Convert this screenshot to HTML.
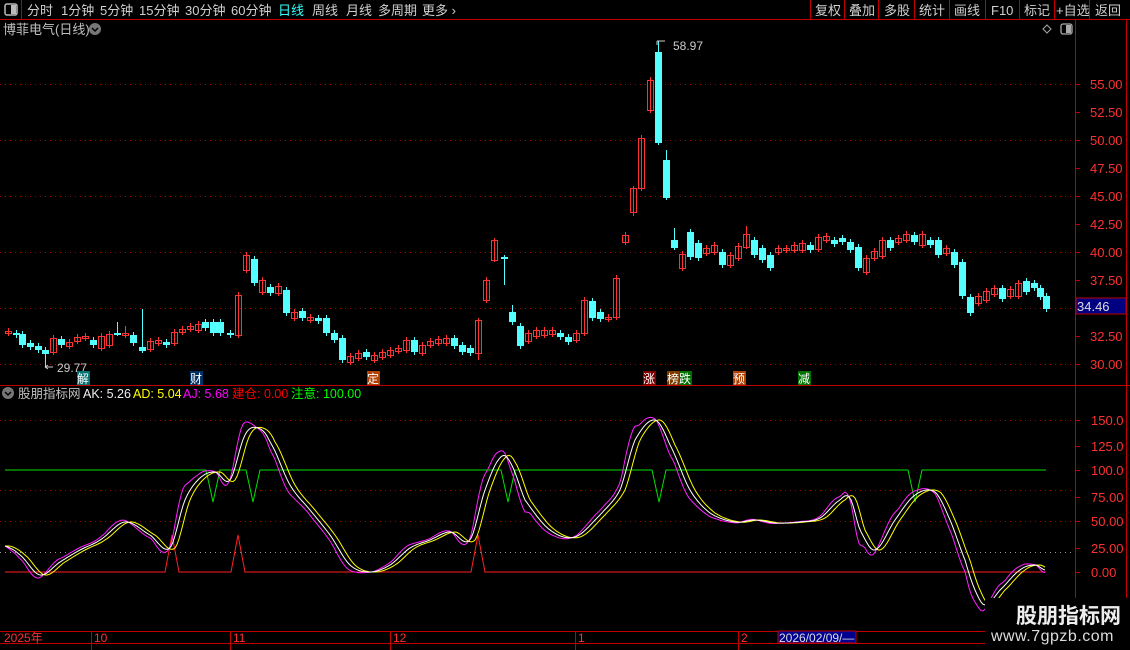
<!DOCTYPE html>
<html><head><meta charset="utf-8">
<style>
html,body{margin:0;padding:0;background:#000;width:1130px;height:650px;overflow:hidden;font-family:"Liberation Sans","Noto Sans CJK SC",sans-serif;}
svg{position:absolute;left:0;top:0}
text{font-family:"Liberation Sans","Noto Sans CJK SC",sans-serif}
</style></head><body>
<svg id="s" width="1130" height="650" xmlns="http://www.w3.org/2000/svg">
<rect width="1130" height="650" fill="#000"/>
<line x1="0" y1="19.5" x2="1130" y2="19.5" stroke="#c00000"/>
<line x1="21.5" y1="0" x2="21.5" y2="19" stroke="#c00000"/>
<rect x="5" y="4" width="12" height="11" rx="2" fill="none" stroke="#bbb" stroke-width="1.5"/>
<rect x="11" y="5" width="5" height="9" fill="#bbb"/>
<g font-size="13" fill="#d0d0d0">
<text x="27" y="15">分时</text><text x="61" y="15">1分钟</text><text x="100" y="15">5分钟</text><text x="139" y="15">15分钟</text><text x="185" y="15">30分钟</text><text x="231" y="15">60分钟</text>
<text x="278" y="15" fill="#3ff">日线</text><text x="312" y="15">周线</text><text x="346" y="15">月线</text><text x="378" y="15">多周期</text><text x="422" y="15">更多 ›</text>
</g>
<g stroke="#c00000"><line x1="810.5" y1="0" x2="810.5" y2="19"/><line x1="844.5" y1="0" x2="844.5" y2="19"/><line x1="878.5" y1="0" x2="878.5" y2="19"/><line x1="914.5" y1="0" x2="914.5" y2="19"/><line x1="949.5" y1="0" x2="949.5" y2="19"/><line x1="985.5" y1="0" x2="985.5" y2="19"/><line x1="1019.5" y1="0" x2="1019.5" y2="19"/><line x1="1054.5" y1="0" x2="1054.5" y2="19"/><line x1="1089.5" y1="0" x2="1089.5" y2="19"/></g>
<g font-size="13" fill="#d0d0d0"><text x="815" y="15">复权</text><text x="849" y="15">叠加</text><text x="884" y="15">多股</text><text x="919" y="15">统计</text><text x="954" y="15">画线</text><text x="991" y="15">F10</text><text x="1024" y="15">标记</text><text x="1056" y="15">+自选</text><text x="1095" y="15">返回</text></g>
<text x="3" y="34" font-size="13" fill="#c0c0c0">博菲电气(日线)</text>
<circle cx="95" cy="29" r="6" fill="#777"/><path d="M92 28l3 3 3-3" stroke="#000" stroke-width="1.5" fill="none"/>
<path d="M1047 25l4 4-4 4-4-4z" fill="none" stroke="#aaa"/>
<rect x="1061" y="24" width="11" height="10" rx="2" fill="none" stroke="#aaa" stroke-width="1.3"/><rect x="1066" y="25" width="5" height="8" fill="#aaa"/>
<line x1="1075.5" y1="20" x2="1075.5" y2="631" stroke="#c00000"/>
<line x1="1126.5" y1="20" x2="1126.5" y2="650" stroke="#c00000"/>
<line x1="0" y1="385.5" x2="1130" y2="385.5" stroke="#c00000"/>
<line x1="0" y1="631.5" x2="985" y2="631.5" stroke="#c00000"/>
<line x1="0" y1="643.5" x2="985" y2="643.5" stroke="#c00000"/>
<g id="grid"></g>
<g font-size="13" fill="#ff3030">
<text x="1090" y="89">55.00</text><text x="1090" y="117">52.50</text><text x="1090" y="145">50.00</text><text x="1090" y="173">47.50</text><text x="1090" y="201">45.00</text><text x="1090" y="229">42.50</text><text x="1090" y="257">40.00</text><text x="1090" y="285">37.50</text><text x="1090" y="341">32.50</text><text x="1090" y="369">30.00</text>
<text x="1091" y="425">150.0</text><text x="1091" y="451">125.0</text><text x="1091" y="475">100.0</text><text x="1091" y="502">75.00</text><text x="1091" y="526">50.00</text><text x="1091" y="553">25.00</text><text x="1091" y="577">0.00</text>
</g>
<rect x="1076" y="298" width="50" height="16" fill="#000080" stroke="#c00000"/>
<text x="1077" y="311" font-size="13" fill="#ddd">34.46</text>
<g id="cand"></g>
<path d="M657 41v4M657 41h8" stroke="#ccc"/><text x="673" y="50" font-size="12" fill="#ccc">58.97</text>
<path d="M45 367h8M45 367l3-2M45 367l3 2" stroke="#ccc" fill="none"/><text x="57" y="372" font-size="12" fill="#ccc">29.77</text>
<g font-size="12" fill="#fff">
<rect x="77" y="371" width="13" height="14" fill="#007070"/><text x="77" y="383">解</text>
<rect x="190" y="371" width="13" height="14" fill="#003060"/><text x="190" y="383">财</text>
<rect x="367" y="371" width="13" height="14" fill="#b04000"/><text x="367" y="383">定</text>
<rect x="643" y="371" width="13" height="14" fill="#800000"/><text x="643" y="383">涨</text>
<rect x="667" y="371" width="13" height="14" fill="#7a3a00"/><text x="667" y="383">榜</text>
<rect x="679" y="371" width="13" height="14" fill="#007000"/><text x="679" y="383">跌</text>
<rect x="733" y="371" width="13" height="14" fill="#b04000"/><text x="733" y="383">预</text>
<rect x="798" y="371" width="13" height="14" fill="#007000"/><text x="798" y="383">减</text>
</g>
<circle cx="8" cy="393" r="6" fill="#777"/><path d="M5 392l3 3 3-3" stroke="#000" stroke-width="1.5" fill="none"/>
<g font-size="12.5"><text x="18" y="398" fill="#c0c0c0">股朋指标网</text><text x="83" y="398" fill="#eee">AK: 5.26</text><text x="133" y="398" fill="#ff0">AD: 5.04</text><text x="183" y="398" fill="#f0f">AJ: 5.68</text><text x="232" y="398" fill="#f00">建仓: 0.00</text><text x="291" y="398" fill="#0f0">注意: 100.00</text></g>
<g id="ind"></g>
<g stroke="#c00000"><line x1="91.5" y1="631" x2="91.5" y2="650"/><line x1="230.5" y1="631" x2="230.5" y2="650"/><line x1="390.5" y1="631" x2="390.5" y2="650"/><line x1="575.5" y1="631" x2="575.5" y2="650"/><line x1="738.5" y1="631" x2="738.5" y2="650"/></g>
<g font-size="12" fill="#ff3030"><text x="4" y="642">2025年</text><text x="94" y="642">10</text><text x="233" y="642">11</text><text x="393" y="642">12</text><text x="578" y="642">1</text><text x="741" y="642">2</text></g>
<rect x="778" y="631" width="78" height="12" fill="#000090" stroke="#c00000"/>
<text x="779" y="642" font-size="12" fill="#ddd">2026/02/09/—</text>
<rect x="985" y="598" width="145" height="52" fill="#000"/>
<text x="1016" y="623" font-size="21" font-weight="bold" fill="#eee">股朋指标网</text>
<text x="991" y="641" font-size="16" fill="#ddd" letter-spacing="0.5">www.7gpzb.com</text>
</svg>
<script>
var NS="http://www.w3.org/2000/svg";
function el(p,t,a){var e=document.createElementNS(NS,t);for(var k in a)e.setAttribute(k,a[k]);document.getElementById(p).appendChild(e);return e;}
[84,140,196,252,308,364].forEach(function(y){el("grid","line",{x1:0,y1:y+.5,x2:1075,y2:y+.5,stroke:"#a00000","stroke-dasharray":"1 4"});});
[420,490,521].forEach(function(y){el("grid","line",{x1:0,y1:y+.5,x2:1075,y2:y+.5,stroke:"#a00000","stroke-dasharray":"1 4"});});
el("grid","line",{x1:0,y1:552.5,x2:1075,y2:552.5,stroke:"#999","stroke-dasharray":"1 4"});
[84,112,140,168,196,224,252,280,308,336,364].forEach(function(y){el("grid","line",{x1:1075,y1:y+.5,x2:1080,y2:y+.5,stroke:"#c00000"});});
[420,446,470,497,521,548,572].forEach(function(y){el("grid","line",{x1:1075,y1:y+.5,x2:1080,y2:y+.5,stroke:"#c00000"});});
var C=[[8,331,333,'r'],[16,333,335,'c'],[22,334,345,'c'],[30,343,347,'c'],[38,346,350,'c'],[45,350,354,'c',347,367],[53,338,352,'r'],[61,339,345,'c'],[69,342,346,'r'],[77,337,341,'r'],[85,336,338,'r'],[93,340,345,'c'],[101,336,348,'r'],[109,334,345,'r'],[117,333,335,'c',322,336],[125,333,335,'r',326,338],[133,335,343,'c'],[142,347,351,'c',309,353],[150,341,349,'r'],[158,340,343,'r'],[166,342,345,'c'],[174,332,343,'r'],[182,329,332,'r'],[190,326,329,'r'],[198,324,330,'r'],[205,322,328,'c'],[213,322,333,'c'],[220,322,333,'c'],[230,333,335,'c'],[238,295,335,'r'],[246,255,270,'r'],[254,259,283,'c'],[262,280,292,'r'],[270,287,293,'c'],[278,286,293,'r'],[286,290,313,'c'],[294,312,318,'r'],[302,311,318,'c'],[310,317,320,'r'],[318,318,321,'c'],[326,318,333,'c'],[334,333,340,'c'],[342,338,360,'c'],[350,356,362,'r'],[358,353,358,'r'],[366,352,357,'c'],[374,355,360,'r'],[382,352,357,'r'],[390,350,355,'r'],[398,348,351,'r'],[406,340,350,'r'],[414,340,352,'c'],[422,345,353,'r'],[430,341,345,'r'],[438,339,343,'r'],[446,338,343,'r'],[454,338,346,'c'],[462,345,352,'c'],[470,348,353,'c'],[478,320,353,'r',318,360],[486,280,300,'r'],[494,240,260,'r',238,262],[504,257,259,'c',255,285],[512,312,322,'c',305,325],[520,326,346,'c'],[528,333,341,'r'],[536,330,336,'r'],[544,330,335,'r'],[552,330,334,'r'],[560,333,337,'c'],[568,337,342,'c'],[576,333,340,'r'],[584,300,333,'r'],[592,301,318,'c'],[600,312,319,'c'],[608,317,319,'r'],[616,278,317,'r'],[625,235,242,'r'],[633,188,212,'r',186,216],[641,138,188,'r'],[650,80,110,'r'],[658,52,143,'c',41,145],[666,160,198,'c',150,200],[674,240,248,'c',228,250],[682,254,268,'r'],[690,232,257,'c'],[698,243,258,'c'],[706,248,253,'r'],[714,245,252,'r'],[722,252,265,'c'],[730,255,265,'r'],[738,246,258,'r'],[746,234,247,'r',226,249],[754,240,255,'c'],[762,248,260,'c'],[770,255,268,'c'],[778,248,252,'r'],[786,248,250,'r'],[794,245,250,'r'],[802,243,250,'r'],[810,245,250,'c'],[818,237,249,'r'],[826,236,240,'r'],[834,240,244,'c'],[842,238,242,'c'],[850,242,250,'c'],[858,247,268,'c'],[866,258,272,'r'],[874,251,258,'r'],[882,240,256,'r'],[890,240,248,'c'],[898,238,242,'r'],[906,234,240,'r'],[914,235,242,'c'],[922,234,245,'r'],[930,240,245,'c'],[938,240,255,'c'],[946,248,253,'r'],[954,252,265,'c'],[962,262,296,'c'],[970,297,313,'c'],[978,296,303,'r'],[986,291,300,'r'],[994,288,294,'r'],[1002,288,299,'c'],[1010,289,296,'r'],[1018,283,296,'r'],[1026,281,292,'c'],[1034,283,288,'c'],[1040,288,297,'c'],[1046,296,309,'c']];
C.forEach(function(c){var col=c[3]=='r'?'#ff3232':'#54ffff';var hi=c[4]||c[1]-3,lo=c[5]||c[2]+3;
el("cand","line",{x1:c[0]+.5,y1:hi,x2:c[0]+.5,y2:lo,stroke:col});
if(c[3]=='r')el("cand","rect",{x:c[0]-2.5,y:c[1]+.5,width:6,height:Math.max(1,c[2]-c[1]),fill:"none",stroke:col});
else el("cand","rect",{x:c[0]-3,y:c[1],width:7,height:Math.max(1,c[2]-c[1]),fill:col});});
var W=[[5,546],[20,555],[40,575],[60,562],[80,550],[100,540],[125,522],[150,535],[170,548],[185,500],[200,478],[215,472],[230,480],[245,435],[258,428],[270,442],[290,485],[310,510],[330,535],[350,565],[370,572],[390,565],[410,548],[430,540],[450,532],[470,540],[485,490],[500,458],[510,462],[525,500],[550,530],[575,537],[600,515],[620,490],[635,440],[655,420],[670,445],[690,490],[710,513],[735,522],[755,520],[775,523],[800,522],[820,518],[840,500],[850,498],[860,530],[875,550],[895,520],[915,495],[935,492],[950,520],[965,560],[975,590],[985,605],[1000,590],[1020,570],[1035,565],[1045,570]];
function interp(x){if(x<=W[0][0])return W[0][1];for(var i=0;i<W.length-1;i++){if(x<=W[i+1][0]){var a=W[Math.max(0,i-1)],b=W[i],c=W[i+1],d=W[Math.min(W.length-1,i+2)];var t=(x-b[0])/(c[0]-b[0]);var t2=t*t,t3=t2*t;return 0.5*((2*b[1])+(-a[1]+c[1])*t+(2*a[1]-5*b[1]+4*c[1]-d[1])*t2+(-a[1]+3*b[1]-3*c[1]+d[1])*t3);}}return W[W.length-1][1];}
var pw="",py="",pm="";
for(var x=5;x<=1045;x+=2){var w=interp(x),y=interp(x-5);var m=w+0.9*(w-y);m=Math.min(m,628);
pw+=(x==5?"M":"L")+x+" "+w.toFixed(1);py+=(x==5?"M":"L")+x+" "+y.toFixed(1);pm+=(x==5?"M":"L")+x+" "+m.toFixed(1);}
var g="M5 470",dips=[213,253,508,659,915];dips.forEach(function(d){g+=" L"+(d-7)+" 470 L"+d+" 502 L"+(d+7)+" 470";});g+=" L1046 470";
el("ind","path",{d:g,stroke:"#00e000",fill:"none"});
var r="M5 572",sp=[172,238,478];sp.forEach(function(d){r+=" L"+(d-7)+" 572 L"+d+" 535 L"+(d+7)+" 572";});r+=" L1046 572";
el("ind","path",{d:r,stroke:"#ff2020",fill:"none"});
el("ind","path",{d:pm,stroke:"#ff20ff",fill:"none"});
el("ind","path",{d:py,stroke:"#ffff00",fill:"none"});
el("ind","path",{d:pw,stroke:"#ffffff",fill:"none"});
</script>
</body></html>
